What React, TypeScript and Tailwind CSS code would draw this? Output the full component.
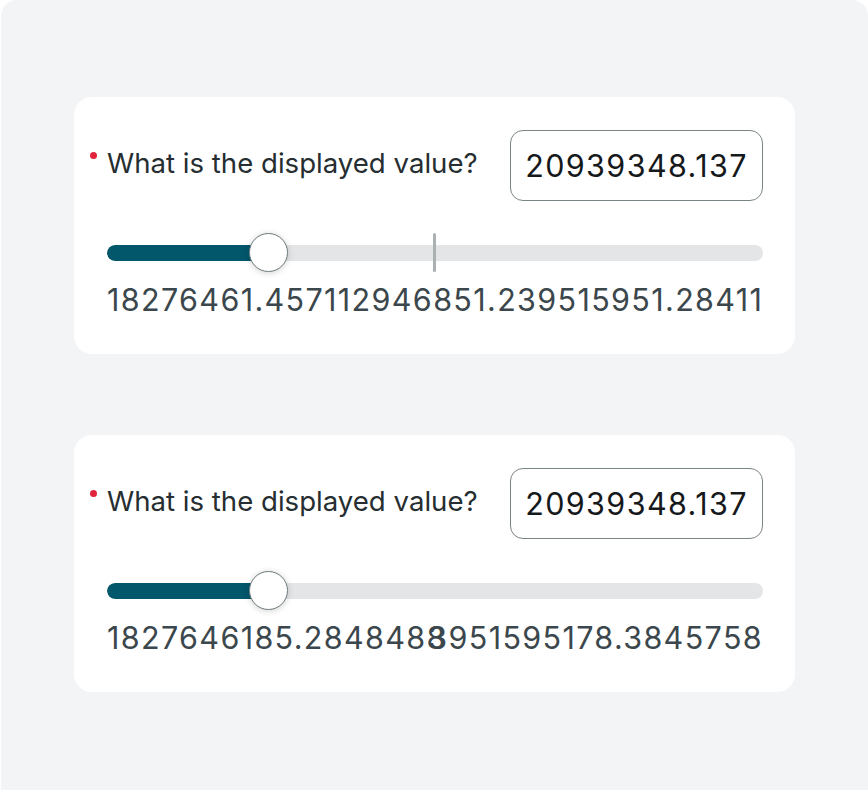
import React from "react";

const font = { fontFamily: "Inter, 'Liberation Sans', sans-serif" };

function Label() {
  return (
    <div className="relative mb-[5px] text-[27.6px] leading-[36px] text-[#262e31]">
      <span className="absolute -left-[17px] top-[7px] w-[7px] h-[7px] rounded-full bg-[#e0243b]" />
      What is the displayed value?
    </div>
  );
}

function ValueBox() {
  return (
    <div className="w-[253px] h-[71px] rounded-[13px] border-[1.5px] border-[#7b8486] flex items-center justify-center text-[30.5px] tracking-[1.4px] text-[#16191b]">
      20939348.137
    </div>
  );
}

function Slider({ tick }: { tick: boolean }) {
  return (
    <div className="relative h-[40px] flex items-center">
      <div className="w-full h-[16px] rounded-full bg-[#e3e5e6] overflow-hidden">
        <div className="h-full w-[162px] rounded-l-full bg-[#03576b]" />
      </div>
      {tick && (
        <div className="absolute left-[326px] top-[0px] w-[3px] h-[39px] rounded-full bg-[#a9b1b3]" />
      )}
      <div className="absolute left-[142px] top-[0px] w-[39px] h-[39px] rounded-full bg-white border-[1.5px] border-[#6f7b7e] shadow-[0_1px_6px_rgba(0,0,0,0.18)]" />
    </div>
  );
}

function Card({ children }: { children: React.ReactNode }) {
  return (
    <div className="w-[721px] h-[257px] rounded-[18px] bg-white pl-[33px] pr-[32px] pt-[33px]">
      {children}
    </div>
  );
}

export default function App() {
  return (
    <div className="bg-white w-[868px] h-[790px]" style={font}>
      <div className="ml-px h-[790px] rounded-t-[16px] bg-[#f3f4f6] pt-[97px] pl-[73px] flex flex-col gap-[81px]">
        <Card>
          <div className="flex items-center justify-between h-[71px]">
            <Label />
            <ValueBox />
          </div>
          <div className="mt-[32px]">
            <Slider tick />
          </div>
          <div className="mt-[9px] h-[36px] flex justify-between text-[30.5px] tracking-[1.35px] leading-[36px] text-[#3b474c] whitespace-nowrap">
            <span>18276461.4571</span>
            <span>12946851.2395</span>
            <span>15951.28411</span>
          </div>
        </Card>
        <Card>
          <div className="flex items-center justify-between h-[71px]">
            <Label />
            <ValueBox />
          </div>
          <div className="mt-[32px]">
            <Slider tick={false} />
          </div>
          <div className="relative mt-[9px] h-[36px] text-[30.5px] tracking-[1.35px] leading-[36px] text-[#3b474c] whitespace-nowrap">
            <span className="absolute left-0 top-0">1827646185.2848488</span>
            <span className="absolute right-0 top-0">3951595178.3845758</span>
          </div>
        </Card>
      </div>
    </div>
  );
}
